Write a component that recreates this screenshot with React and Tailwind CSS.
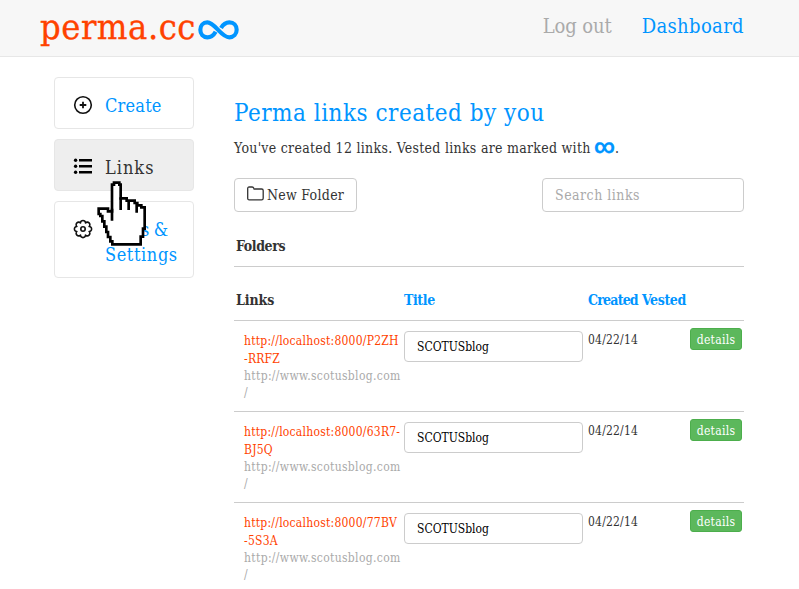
const links = [
  { id: "P2ZH-RRFZ", lines: ["http://localhost:8000/P2ZH", "-RRFZ"] },
  { id: "63R7-BJ5Q", lines: ["http://localhost:8000/63R7-", "BJ5Q"] },
  { id: "77BV-5S3A", lines: ["http://localhost:8000/77BV", "-5S3A"] },
];

function LogoMark() {
  return (
    <svg className="ml-[2px] mt-[3px] h-5 w-[41px] shrink-0" viewBox="533 59 123 60" fill="none" stroke="#0095ff" strokeWidth="12.5">
      <path d="M586 94 C578 108 570 111 561 111 C548 111 540 101 540 88.5 C540 76 548 66 561 66 C584 66 602 111 627 111 C640 111 649 101 649 88.5 C649 76 640 66 627 66 C618 66 610 69 602 83" />
    </svg>
  );
}

function PlusIcon() {
  return (
    <svg className="h-5 w-5" viewBox="0 0 20 20" fill="none" stroke="#111" strokeWidth="1.6">
      <circle cx="10" cy="10" r="8.3" />
      <path d="M10 6.7v6.6M6.7 10h6.6" strokeWidth="1.8" />
    </svg>
  );
}

function ListIcon() {
  return (
    <svg className="h-5 w-5" viewBox="0 0 20 20" fill="#000">
      <circle cx="2.6" cy="4.2" r="1.7" />
      <circle cx="2.6" cy="10.2" r="1.7" />
      <circle cx="2.6" cy="16.2" r="1.7" />
      <path d="M6 3h13v2.4H6zM6 9h13v2.4H6zM6 15h13v2.4H6z" />
    </svg>
  );
}

function GearIcon() {
  return (
    <svg className="h-5 w-5" viewBox="-10 -10 20 20" fill="none" stroke="#111" strokeWidth="1.6" strokeLinejoin="round">
      <path d="M6.1 -2.5C9.4 -2.6 9.4 2.6 6.1 2.5C8.5 4.8 4.8 8.5 2.5 6.1C2.6 9.4 -2.6 9.4 -2.5 6.1C-4.8 8.5 -8.5 4.8 -6.1 2.5C-9.4 2.6 -9.4 -2.6 -6.1 -2.5C-8.5 -4.8 -4.8 -8.5 -2.5 -6.1C-2.6 -9.4 2.6 -9.4 2.5 -6.1C4.8 -8.5 8.5 -4.8 6.1 -2.5Z" />
      <circle r="2.2" />
    </svg>
  );
}

function FolderIcon() {
  return (
    <svg className="mb-1 mr-[3px] h-[15px] w-[17px]" viewBox="0 0 17 15" fill="none" stroke="#333" strokeWidth="1.3">
      <path d="M.7 12.2V2.5Q.7 1 2.2 1H5.2Q6.4 1 6.8 2.2L7.1 3H14.6Q16.2 3 16.2 4.5V12.2Q16.2 13.8 14.6 13.8H2.2Q.7 13.8 .7 12.2Z" />
    </svg>
  );
}

function HandCursor() {
  return (
    <svg className="absolute left-[92px] top-[178px] h-[72px] w-[60px]" viewBox="0 0 180 216" fill="#fff" stroke="#000" strokeWidth="8">
      <path d="M60 100V20H66V14H82V20H86V61H104V68H128V75H136V82H148V88H158V152H153V176H146V199H61V190H55V177H48V162H43V146H37V130H31V114H25V108H20V92H48V100H60Z" />
      <path d="M60 92V128M86 58V96M110 66V96M134 78V104" fill="none" />
    </svg>
  );
}

function NavCard({ icon, active, children }) {
  return (
    <a className={`flex items-start rounded border border-[#e6e6e6] pb-[10px] pl-[18px] pt-[13px] text-lg leading-[25px] ${active ? "bg-[#eee] text-[#333] tracking-[1px]" : "bg-white text-[#0095ff] tracking-[0.2px]"}`}>
      <span className={`mr-3 h-5 w-5 shrink-0 ${active ? "mt-[3px]" : "mt-1"}`}>{icon}</span>
      <span className="pt-[2px]">{children}</span>
    </a>
  );
}

export default function App() {
  return (
    <div className="h-[589px] w-[799px] overflow-hidden bg-white font-['DejaVu_Serif_Condensed','DejaVu_Serif',serif] text-sm tracking-[0.28px] text-[#333]">
      <header className="flex h-[57px] items-center justify-between border-b border-[#e7e7e7] bg-[#f7f7f7] pl-10 pr-[55px]">
        <div className="flex items-center">
          <span className="pb-[2px] text-[36px] leading-[54px] tracking-[0.5px] text-[#ff4200] [-webkit-text-stroke:0.3px_#ff4200]">perma.cc</span>
          <LogoMark />
        </div>
        <nav className="flex gap-[30px] pb-1 text-xl tracking-[0.35px]">
          <a className="tracking-[-0.1px] text-[#aaa]">Log out</a>
          <a className="text-[#0095ff]">Dashboard</a>
        </nav>
      </header>

      <div className="flex pl-[54px] pt-5">
        <aside className="flex w-[140px] shrink-0 flex-col gap-[10px]">
          <NavCard icon={<PlusIcon />}>Create</NavCard>
          <NavCard icon={<ListIcon />} active>Links</NavCard>
          <NavCard icon={<GearIcon />}><span className="tracking-[0.45px]">Tools</span><span className="tracking-[-1px]"> &amp;</span><br /><span className="tracking-[0.6px]">Settings</span></NavCard>
        </aside>

        <main className="ml-10 w-[510px] shrink-0 pt-5">
          <h1 className="h-8 text-2xl leading-8 tracking-[0.5px] text-[#0095ff]">Perma links created by you</h1>
          <p className="mt-[7px] flex h-6 items-center whitespace-pre leading-6">
            You've created 12 links. Vested links are marked with <b className="-ml-px mb-[4px] font-['Roboto'] text-[20px] leading-5 tracking-normal text-[#0095ff] [-webkit-text-stroke:0.2px_#0095ff]">∞</b>.
          </p>

          <div className="mt-[18px] flex justify-between">
            <button className="flex h-[34px] w-[123px] items-center rounded border border-[#ccc] bg-white pl-3 tracking-[0.28px]">
              <FolderIcon />
              <span className="whitespace-nowrap">New Folder</span>
            </button>
            <input className="h-[34px] w-[202px] rounded border border-[#ccc] px-3 tracking-[0.5px] placeholder:text-[#aaa]" placeholder="Search links" />
          </div>

          <div className="mt-[13px] h-[42px] border-b border-[#ccc] pl-[2px] font-bold leading-[42px] tracking-[-0.4px]">Folders</div>
          <div className="mt-3 grid h-[42px] grid-cols-[168px_184px_54px_1fr] border-b border-[#ccc] pl-[2px] font-bold leading-[42px] tracking-[-0.4px]">
            <span className="tracking-[-0.1px]">Links</span>
            <span className="text-[#0095ff]">Title</span>
            <span className="tracking-[-0.8px] text-[#0095ff]">Created</span>
            <span className="text-[#0095ff]">Vested</span>
          </div>

          {links.map((link) => (
            <div key={link.id} className="grid h-[91px] grid-cols-[160px_184px_102px_52px] items-start border-b border-[#ccc] pl-[10px] text-xs">
              <div className="whitespace-nowrap pt-[11px] tracking-[0.24px]">
                <a className="block leading-[18px] text-[#ff4200]">{link.lines[0]}<br />{link.lines[1]}</a>
                <div className="leading-[17px] tracking-[0.34px] text-[#aaa]">http://www.scotusblog.com<br />/</div>
              </div>
              <input className="mt-[10px] h-[31px] w-[179px] rounded border border-[#ccc] px-3 text-black tracking-[0px]" defaultValue="SCOTUSblog" />
              <span className="pt-[10px] leading-[18px] tracking-[0.2px]">04/22/14</span>
              <button className="mt-[7px] h-[22px] w-[52px] rounded-[3px] border border-[#4cae4c] bg-[#5cb85c] pt-[2px] leading-[18px] text-white">details</button>
            </div>
          ))}
        </main>
      </div>
      <HandCursor />
    </div>
  );
}
